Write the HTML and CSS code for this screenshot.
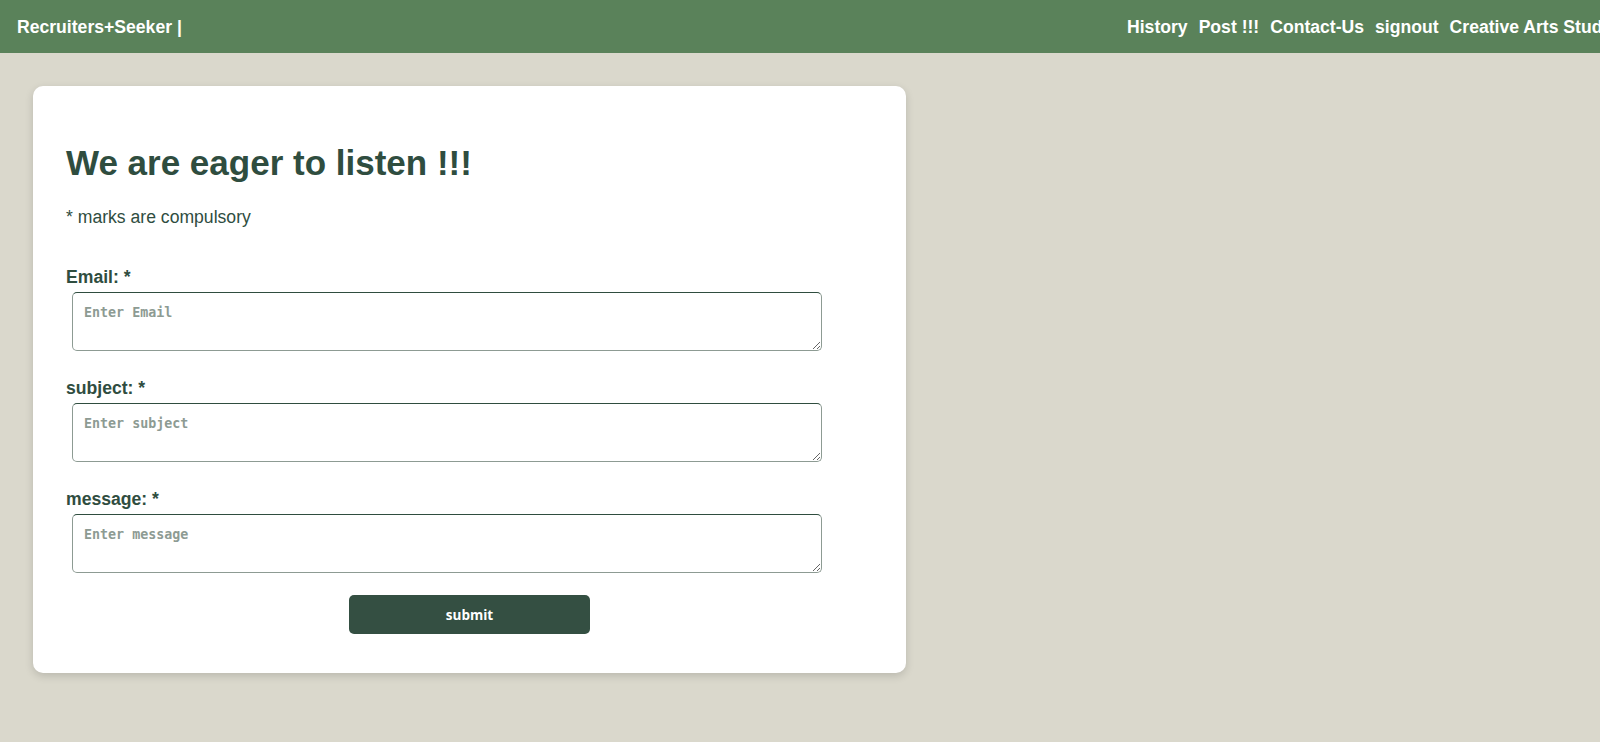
FILE: index.html
```html
<!DOCTYPE html>
<html lang="en">
<head>
<meta charset="utf-8">
<title>Contact Us</title>
<link rel="stylesheet" href="styles.css">
</head>
<body>
<nav class="navbar">
  <div class="brand">Recruiters+Seeker |</div>
  <ul class="nav-links">
    <li><a href="#">History</a></li>
    <li><a href="#">Post !!!</a></li>
    <li><a href="#">Contact-Us</a></li>
    <li><a href="#">signout</a></li>
    <li><a href="#">Creative Arts Studio</a></li>
  </ul>
</nav>
<main class="page">
  <section class="card">
    <h1 class="title">We are eager to listen !!!</h1>
    <p class="note">* marks are compulsory</p>
    <form class="form">
      <div class="field">
        <label for="email">Email: *</label>
        <textarea id="email" placeholder="Enter Email"></textarea>
      </div>
      <div class="field">
        <label for="subject">subject: *</label>
        <textarea id="subject" placeholder="Enter subject"></textarea>
      </div>
      <div class="field">
        <label for="message">message: *</label>
        <textarea id="message" placeholder="Enter message"></textarea>
      </div>
      <button type="button" class="submit">submit</button>
    </form>
  </section>
</main>
</body>
</html>
```
FILE: styles.css
```css
* { box-sizing: border-box; }
html, body { margin: 0; padding: 0; }
body {
  background: #dad8cc;
  font-family: "Liberation Sans", Arial, sans-serif;
  color: #2f4d3f;
  overflow: hidden;
}
.navbar {
  height: 53px;
  background: #5a825a;
  display: flex;
  align-items: center;
  padding: 2px 0 0 17px;
  white-space: nowrap;
  overflow: hidden;
}
.brand {
  flex: 0 0 1110px;
  font-weight: bold;
  font-size: 17.6px;
  color: #fff;
}
.nav-links {
  display: flex;
  gap: 11px;
  list-style: none;
  margin: 0;
  padding: 0;
  flex-shrink: 0;
}
.nav-links a {
  color: #fff;
  text-decoration: none;
  font-weight: bold;
  font-size: 17.6px;
}
.page {
  padding: 33px;
}
.card {
  width: 873px;
  background: #fff;
  border-radius: 10px;
  box-shadow: 0 3px 8px rgba(0, 0, 0, 0.15);
  padding: 57px 33px 39px;
}
.title {
  margin: 0;
  font-size: 35px;
  line-height: 40px;
  font-weight: bold;
  color: #2f4d3f;
}
.note {
  margin: 24px 0 40px;
  font-size: 17.6px;
  line-height: 20px;
}
.field {
  margin-bottom: 27px;
}
.field label {
  display: block;
  font-weight: bold;
  font-size: 17.6px;
  line-height: 20px;
}
.field textarea {
  display: block;
  margin: 5px 0 0 6px;
  width: 750px;
  height: 59px;
  padding: 12px 11px 11px;
  border: 1px solid #8d9b93;
  border-top-color: #2f4d3f;
  border-radius: 5px;
  font-family: "DejaVu Sans Mono", monospace;
  font-size: 13.33px;
  font-weight: bold;
  color: #2f4d3f;
  background: #fff;
}
.field textarea::placeholder {
  color: #8d9b93;
}
.submit {
  display: block;
  width: 241px;
  height: 39px;
  margin: -5px auto 0;
  background: #344f42;
  color: #fff;
  border: none;
  border-radius: 5px;
  font-family: "Open Sans", sans-serif;
  font-weight: bold;
  font-size: 13.5px;
}
```
